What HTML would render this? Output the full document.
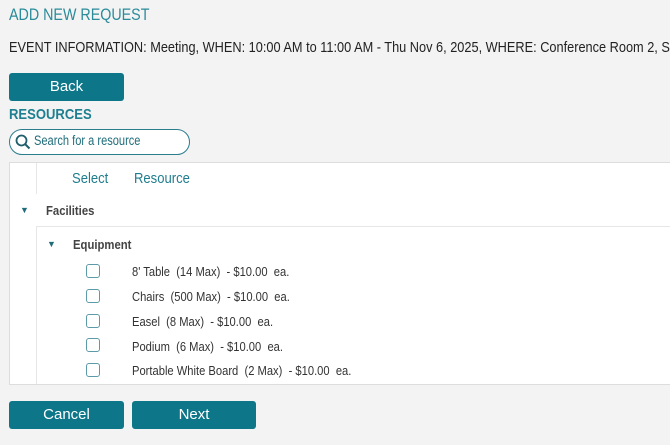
<!DOCTYPE html>
<html><head><style>
body{margin:0;width:670px;height:445px;background:#f3f3f3;font-family:"Liberation Sans",sans-serif;position:relative;overflow:hidden}
.a{position:absolute;white-space:nowrap}
.s{transform:scaleX(.87);transform-origin:0 0}
.btn{position:absolute;background:#0e7689;color:#fff;border-radius:3px;font-size:15px;text-align:center;line-height:28px;height:28px}
.cb{position:absolute;left:86px;width:12px;height:12px;border:1.5px solid #5c9aa7;border-radius:3px;background:#fff}
.it{position:absolute;left:132px;font-size:13px;color:#333;white-space:nowrap;transform:scaleX(.86);transform-origin:0 0}
</style></head><body>
<div class="a" style="left:9px;top:5px;font-size:17px;color:#2a8b9a;transform:scaleX(.84);transform-origin:0 0">ADD NEW REQUEST</div>
<div class="a" style="left:9px;top:39px;font-size:15px;color:#222;transform:scaleX(.85);transform-origin:0 0">EVENT INFORMATION: Meeting, WHEN: 10:00 AM to 11:00 AM - Thu Nov 6, 2025, WHERE: Conference Room 2, Santa</div>
<div class="btn" style="left:9px;top:73px;width:115px">Back</div>
<div class="a s" style="left:9px;top:106px;font-size:15px;font-weight:bold;color:#1d7f8f">RESOURCES</div>
<div class="a" style="left:9px;top:129px;width:179px;height:24px;border:1px solid #2b7d8c;border-radius:13px;background:#fff"></div>
<svg class="a" style="left:15px;top:134px" width="16" height="16" viewBox="0 0 16 16"><circle cx="6.5" cy="6.5" r="5" fill="none" stroke="#1f5f6b" stroke-width="1.8"/><path d="M10 10l4.5 4.5" stroke="#1f5f6b" stroke-width="2"/></svg>
<div class="a" style="left:34px;top:133px;font-size:13.5px;color:#1f6d7b;transform:scaleX(.82);transform-origin:0 0">Search for a resource</div>
<div class="a" style="left:9px;top:162px;width:670px;height:221px;border:1px solid #ddd;background:#fff"></div>
<div class="a" style="left:36px;top:163px;width:1px;height:31px;background:#e6e6e6"></div>
<div class="a s" style="left:72px;top:170px;font-size:15px;color:#1f7d8d">Select</div>
<div class="a s" style="left:134px;top:170px;font-size:15px;color:#1f7d8d">Resource</div>
<div class="a" style="left:20px;top:205px;font-size:9px;color:#1f6d7b">▼</div>
<div class="a s" style="left:46px;top:203px;font-size:13px;font-weight:bold;color:#444">Facilities</div>
<div class="a" style="left:36px;top:226px;width:640px;height:157px;border-left:1px solid #e6e6e6;border-top:1px solid #e6e6e6"></div>
<div class="a" style="left:47px;top:239px;font-size:9px;color:#1f6d7b">▼</div>
<div class="a s" style="left:73px;top:237px;font-size:13px;font-weight:bold;color:#444">Equipment</div>
<div class="cb" style="top:264px"></div><div class="it" style="top:264px">8' Table&nbsp; (14 Max)&nbsp; - $10.00&nbsp; ea.</div>
<div class="cb" style="top:289px"></div><div class="it" style="top:289px">Chairs&nbsp; (500 Max)&nbsp; - $10.00&nbsp; ea.</div>
<div class="cb" style="top:314px"></div><div class="it" style="top:314px">Easel&nbsp; (8 Max)&nbsp; - $10.00&nbsp; ea.</div>
<div class="cb" style="top:338px"></div><div class="it" style="top:339px">Podium&nbsp; (6 Max)&nbsp; - $10.00&nbsp; ea.</div>
<div class="cb" style="top:363px"></div><div class="it" style="top:363px">Portable White Board&nbsp; (2 Max)&nbsp; - $10.00&nbsp; ea.</div>
<div class="btn" style="left:9px;top:401px;width:115px">Cancel</div>
<div class="btn" style="left:132px;top:401px;width:124px">Next</div>
</body></html>
